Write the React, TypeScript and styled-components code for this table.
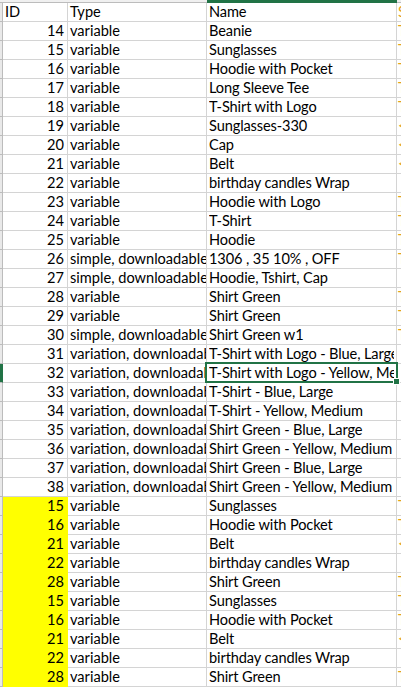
import React from "react";
import styled, { createGlobalStyle, css } from "styled-components";

const Global = createGlobalStyle`
  html, body { margin: 0; padding: 0; background: #ffffff; }
  body { overflow: hidden; }
`;

const GREEN = "#217346";
const GRID = "#d4d4d4";
const HEAD_LINE = "#bcbcbc";
const YELLOW = "#ffff00";

const COLS = "3px 65px 139px 190px 1fr";

const Sheet = styled.div`
  width: 401px;
  height: 687px;
  overflow: hidden;
  font-family: "Lato", "Liberation Sans", sans-serif;
  font-size: 14.6px;
  color: #000;
`;

const HeaderStrip = styled.div`
  display: grid;
  grid-template-columns: ${COLS};
  height: 3px;
`;

const HeadSeg = styled.div<{ $active?: boolean }>`
  background: #f0f0f0;
  border-bottom: 1px solid ${(p) => (p.$active ? GREEN : HEAD_LINE)};
  ${(p) =>
    p.$active &&
    css`
      border-bottom-width: 3px;
      background: ${GREEN};
    `}
  box-sizing: border-box;
`;

const Row = styled.div`
  display: grid;
  grid-template-columns: ${COLS};
  height: 19px;
`;

const RowHead = styled.div<{ $active?: boolean }>`
  box-sizing: border-box;
  background: #e9e9e9;
  border-bottom: 1px solid ${HEAD_LINE};
  border-right: 1px solid ${(p) => (p.$active ? GREEN : HEAD_LINE)};
  ${(p) =>
    p.$active &&
    css`
      background: ${GREEN};
    `}
`;

const Cell = styled.div<{ $align?: "left" | "right"; $fill?: string; $tint?: string }>`
  box-sizing: border-box;
  position: relative;
  border-right: 1px solid ${(p) => p.$fill || GRID};
  border-bottom: 1px solid ${(p) => p.$fill || GRID};
  background: ${(p) => p.$fill || "transparent"};
  text-align: ${(p) => p.$align || "left"};
  padding: 0 2px 0 2px;
  line-height: 18px;
  height: 19px;
  white-space: nowrap;
  overflow: hidden;
  color: ${(p) => p.$tint || "#000"};
`;

const IdCell = styled(Cell)`
  padding-right: 3px;
`;

const EdgeCell = styled(Cell)`
  border-right: none;
  padding-left: 1px;
  color: #e3a21a;
`;

const NameCell = styled(Cell)<{ $selected?: boolean }>`
  overflow: visible;
  letter-spacing: -0.12px;
  ${(p) =>
    p.$selected &&
    css`
      z-index: 2;
      &::before {
        content: "";
        position: absolute;
        left: -2px;
        top: -2px;
        right: -2px;
        bottom: -1px;
        border: 2px solid ${GREEN};
        pointer-events: none;
      }
      &::after {
        content: "";
        position: absolute;
        right: -4px;
        bottom: -3px;
        width: 5px;
        height: 5px;
        background: ${GREEN};
        border: 1px solid #fff;
      }
    `}
`;

const NameText = styled.span`
  display: block;
  overflow: hidden;
`;

type Item = { id: string; type: string; name: string; s: string; yellow?: boolean; selected?: boolean };

const VD = "variation, downloadable";
const SD = "simple, downloadable";

const rows: Item[] = [
  { id: "14", type: "variable", name: "Beanie", s: "T" },
  { id: "15", type: "variable", name: "Sunglasses", s: "T" },
  { id: "16", type: "variable", name: "Hoodie with Pocket", s: "T" },
  { id: "17", type: "variable", name: "Long Sleeve Tee", s: "T" },
  { id: "18", type: "variable", name: "T-Shirt with Logo", s: "T" },
  { id: "19", type: "variable", name: "Sunglasses-330", s: "<" },
  { id: "20", type: "variable", name: "Cap", s: "<" },
  { id: "21", type: "variable", name: "Belt", s: "<" },
  { id: "22", type: "variable", name: "birthday candles Wrap", s: "" },
  { id: "23", type: "variable", name: "Hoodie with Logo", s: "T" },
  { id: "24", type: "variable", name: "T-Shirt", s: "T" },
  { id: "25", type: "variable", name: "Hoodie", s: "T" },
  { id: "26", type: SD, name: "1306 , 35 10% , OFF", s: "T" },
  { id: "27", type: SD, name: "Hoodie, Tshirt, Cap", s: "" },
  { id: "28", type: "variable", name: "Shirt Green", s: "T" },
  { id: "29", type: "variable", name: "Shirt Green", s: "T" },
  { id: "30", type: SD, name: "Shirt Green w1", s: "T" },
  { id: "31", type: VD, name: "T-Shirt with Logo - Blue, Large", s: "" },
  { id: "32", type: VD, name: "T-Shirt with Logo - Yellow, Medium", s: "", selected: true },
  { id: "33", type: VD, name: "T-Shirt - Blue, Large", s: "" },
  { id: "34", type: VD, name: "T-Shirt - Yellow, Medium", s: "" },
  { id: "35", type: VD, name: "Shirt Green - Blue, Large", s: "" },
  { id: "36", type: VD, name: "Shirt Green - Yellow, Medium", s: "" },
  { id: "37", type: VD, name: "Shirt Green - Blue, Large", s: "" },
  { id: "38", type: VD, name: "Shirt Green - Yellow, Medium", s: "" },
];

const dupes: Item[] = [
  { id: "15", type: "variable", name: "Sunglasses", s: "T", yellow: true },
  { id: "16", type: "variable", name: "Hoodie with Pocket", s: "T", yellow: true },
  { id: "21", type: "variable", name: "Belt", s: "<", yellow: true },
  { id: "22", type: "variable", name: "birthday candles Wrap", s: "", yellow: true },
  { id: "28", type: "variable", name: "Shirt Green", s: "T", yellow: true },
];

const all: Item[] = [...rows, ...dupes, ...dupes];

export default function App() {
  return (
    <>
      <Global />
      <Sheet>
        <HeaderStrip>
          <HeadSeg />
          <HeadSeg />
          <HeadSeg />
          <HeadSeg $active />
          <HeadSeg />
        </HeaderStrip>
        <Row>
          <RowHead />
          <Cell>ID</Cell>
          <Cell>Type</Cell>
          <NameCell>
            <NameText>Name</NameText>
          </NameCell>
          <EdgeCell $tint="#222">S</EdgeCell>
        </Row>
        {all.map((r, i) => (
          <Row key={i}>
            <RowHead $active={r.selected} />
            <IdCell $align="right" $fill={r.yellow ? YELLOW : undefined}>
              {r.id}
            </IdCell>
            <Cell>{r.type}</Cell>
            <NameCell $selected={r.selected}>
              <NameText>{r.name}</NameText>
            </NameCell>
            <EdgeCell $tint={r.s === "<" ? "#555" : undefined}>{r.s}</EdgeCell>
          </Row>
        ))}
      </Sheet>
    </>
  );
}
